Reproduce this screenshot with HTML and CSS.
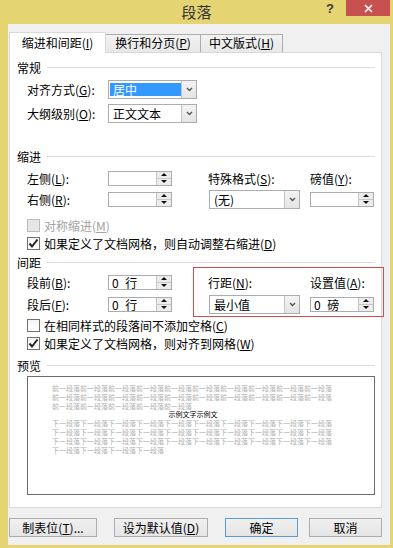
FILE: index.html
```html
<!DOCTYPE html>
<html lang="zh-CN">
<head>
    <meta charset="UTF-8">
    <meta name="viewport" content="width=device-width, initial-scale=1.0">
    <title>段落</title>
    <link rel="stylesheet" href="styles.css">
</head>
<body>
    <div class="titlebar">
        <div></div>
        <div class="title">段落</div>
        <div class="caption">
            <span class="help">?</span>
            <span class="close">
                <svg width="9" height="9" viewBox="0 0 9 9"><path d="M1 1L8 8M8 1L1 8" stroke="#fff" stroke-width="1.6"/></svg>
            </span>
        </div>
    </div>

    <div class="client">
        <div class="tabs">
            <div class="tab tab-1 active">缩进和间距(<u>I</u>)</div>
            <div class="tab tab-2">换行和分页(<u>P</u>)</div>
            <div class="tab tab-3">中文版式(<u>H</u>)</div>
        </div>

        <div class="panel">
            <!-- 常规 -->
            <div class="group-title gt-general"><span>常规</span><i></i></div>
            <div class="field field-first">
                <label>对齐方式(<u>G</u>):</label>
                <div class="combo combo-short">
                    <span class="sel">居中</span>
                    <span class="drop"><svg width="7" height="5" viewBox="0 0 7 5"><path d="M1 1L3.5 3.5L6 1" fill="none" stroke="#555" stroke-width="1.4"/></svg></span>
                </div>
            </div>
            <div class="field">
                <label>大纲级别(<u>O</u>):</label>
                <div class="combo combo-short">
                    <span>正文文本</span>
                    <span class="drop"><svg width="7" height="5" viewBox="0 0 7 5"><path d="M1 1L3.5 3.5L6 1" fill="none" stroke="#555" stroke-width="1.4"/></svg></span>
                </div>
            </div>

            <!-- 缩进 -->
            <div class="group-title gt-indent"><span>缩进</span><i></i></div>
            <div class="indent-grid">
                <label>左侧(<u>L</u>):</label>
                <div class="spin"><span></span><span class="arrows"><b class="up"></b><b class="down"></b></span></div>
                <label>特殊格式(<u>S</u>):</label>
                <label>磅值(<u>Y</u>):</label>
                <label>右侧(<u>R</u>):</label>
                <div class="spin"><span></span><span class="arrows"><b class="up"></b><b class="down"></b></span></div>
                <div class="combo combo-mid">
                    <span>(无)</span>
                    <span class="drop"><svg width="7" height="5" viewBox="0 0 7 5"><path d="M1 1L3.5 3.5L6 1" fill="none" stroke="#555" stroke-width="1.4"/></svg></span>
                </div>
                <div class="spin"><span></span><span class="arrows"><b class="up"></b><b class="down"></b></span></div>
            </div>

            <div class="check check-mirror disabled"><span class="box"></span>对称缩进(<u>M</u>)</div>
            <div class="check">
                <span class="box"><svg width="11" height="11" viewBox="0 0 11 11"><path d="M1.5 5.5L4 8.5L9.5 1.5" fill="none" stroke="#222" stroke-width="2"/></svg></span>如果定义了文档网格，则自动调整右缩进(<u>D</u>)
            </div>

            <!-- 间距 -->
            <div class="group-title gt-spacing"><span>间距</span><i></i></div>
            <div class="spacing-grid">
                <label>段前(<u>B</u>):</label>
                <div class="spin"><span class="val">0 行</span><span class="arrows"><b class="up"></b><b class="down"></b></span></div>
                <div class="line-box">
                    <label>行距(<u>N</u>):</label>
                    <label>设置值(<u>A</u>):</label>
                    <div class="combo combo-mid">
                        <span>最小值</span>
                        <span class="drop"><svg width="7" height="5" viewBox="0 0 7 5"><path d="M1 1L3.5 3.5L6 1" fill="none" stroke="#555" stroke-width="1.4"/></svg></span>
                    </div>
                    <div class="spin"><span class="val">0 磅</span><span class="arrows"><b class="up"></b><b class="down"></b></span></div>
                </div>
                <label>段后(<u>F</u>):</label>
                <div class="spin"><span class="val">0 行</span><span class="arrows"><b class="up"></b><b class="down"></b></span></div>
            </div>

            <div class="check check-same"><span class="box"></span>在相同样式的段落间不添加空格(<u>C</u>)</div>
            <div class="check check-grid">
                <span class="box"><svg width="11" height="11" viewBox="0 0 11 11"><path d="M1.5 5.5L4 8.5L9.5 1.5" fill="none" stroke="#222" stroke-width="2"/></svg></span>如果定义了文档网格，则对齐到网格(<u>W</u>)
            </div>

            <!-- 预览 -->
            <div class="group-title gt-preview"><span>预览</span><i></i></div>
            <div class="preview">
                <div class="preview-text">
                    <div>前一段落前一段落前一段落前一段落前一段落前一段落前一段落前一段落前一段落前一段落</div>
                    <div>前一段落前一段落前一段落前一段落前一段落前一段落前一段落前一段落前一段落前一段落</div>
                    <div>前一段落前一段落前一段落前一段落前一段落</div>
                    <div class="current">示例文字示例文</div>
                    <div>下一段落下一段落下一段落下一段落下一段落下一段落下一段落下一段落下一段落下一段落</div>
                    <div>下一段落下一段落下一段落下一段落下一段落下一段落下一段落下一段落下一段落下一段落</div>
                    <div>下一段落下一段落下一段落下一段落下一段落下一段落下一段落下一段落下一段落下一段落</div>
                    <div>下一段落下一段落下一段落下一段落</div>
                </div>
            </div>
        </div>

        <div class="buttons">
            <button class="btn btn-tabs">制表位(<u>T</u>)...</button>
            <button class="btn btn-default">设为默认值(<u>D</u>)</button>
            <button class="btn btn-ok">确定</button>
            <button class="btn btn-cancel">取消</button>
        </div>
    </div>
</body>
</html>
```

FILE: styles.css
```css
:root {
    --frame: #e5d472;
    --face: #f0f0f0;
    --edge: #acacac;
    --rule: #dcdcdc;
}

* {
    box-sizing: border-box;
}

body {
    margin: 0;
    width: 393px;
    height: 548px;
    overflow: hidden;
    background: var(--frame);
    font-family: "Noto Sans CJK SC", "Noto Sans", sans-serif;
    font-size: 12px;
    color: #000;
}

u {
    text-decoration: underline;
    text-underline-offset: 1px;
}

/* title bar */
.titlebar {
    height: 24px;
    display: grid;
    grid-template-columns: 1fr auto 1fr;
}

.title {
    font-size: 15px;
    line-height: 24px;
    color: #333;
}

.caption {
    display: flex;
    justify-content: flex-end;
    align-items: flex-start;
}

.help {
    font-family: "Liberation Sans", sans-serif;
    font-weight: bold;
    font-size: 13px;
    line-height: 14px;
    color: #3a3a3a;
    margin: 2px 12px 0 0;
}

.close {
    width: 44px;
    height: 16px;
    margin-right: 3px;
    background: #c75050;
    display: flex;
    align-items: center;
    justify-content: center;
}

/* client area */
.client {
    margin-left: 8px;
    width: 382px;
    height: 521px;
    background: var(--face);
    padding: 8px 0 0 1px;
}

.tabs {
    display: flex;
    align-items: flex-end;
    height: 21px;
    margin-bottom: -1px;
}

.tab {
    height: 18px;
    margin-bottom: 1px;
    line-height: 16px;
    text-align: center;
    border: 1px solid var(--edge);
    border-bottom: none;
    background: linear-gradient(#f2f2f2, #e8e8e8);
}

.tab-1 {
    width: 97px;
    height: 21px;
    margin-bottom: 0;
    line-height: 19px;
    background: #fff;
    border-color: #d9d9d9;
    position: relative;
    z-index: 1;
}

.tab-2 {
    width: 95px;
    border-left: none;
}

.tab-3 {
    width: 82px;
    border-left: none;
}

.panel {
    position: relative;
    width: 373px;
    height: 456px;
    background: #fff;
    border: 1px solid #d9d9d9;
    padding: 0 6px 0 7px;
}

.group-title {
    display: flex;
    align-items: center;
    gap: 6px;
    height: 16px;
}

.group-title i {
    flex: 1;
    height: 1px;
    background: var(--rule);
}

.gt-general { margin-top: 6px; }
.gt-indent { margin-top: 25px; }
.gt-spacing { margin-top: 3px; }
.gt-preview { margin-top: 6px; }

.field {
    display: flex;
    align-items: center;
    height: 19px;
    margin: 5px 0 0 10px;
}

.field label {
    width: 81px;
}

/* combo box */
.combo {
    display: flex;
    align-items: center;
    height: 19px;
    border: 1px solid var(--edge);
    background: #fff;
    padding-left: 4px;
}

.combo-short { width: 89px; }
.combo-mid { width: 91px; margin-left: 1px; }

.combo .sel {
    width: 71px;
    height: 13px;
    line-height: 13px;
    margin-left: -3px;
    padding-left: 3px;
    background: #3399ff;
    color: #fff;
}

.combo .drop {
    margin-left: auto;
    width: 15px;
    height: 17px;
    border-left: 1px solid #c4c4c4;
    background: linear-gradient(#f3f3f3, #e4e4e4);
    display: flex;
    align-items: center;
    justify-content: center;
}

/* spin box */
.spin {
    display: flex;
    align-items: center;
    width: 64px;
    height: 15px;
    border: 1px solid var(--edge);
    background: #fff;
    padding-left: 3px;
}

.spin .val {
    word-spacing: 4px;
}

.spin .arrows {
    margin-left: auto;
    width: 15px;
    height: 13px;
    border-left: 1px solid #c4c4c4;
    background: #ececec;
    display: flex;
    flex-direction: column;
}

.arrows b {
    flex: 1;
    display: flex;
    align-items: center;
    justify-content: center;
}

.arrows b.up {
    border-bottom: 1px solid #c8c8c8;
}

.arrows b::after {
    content: "";
    border-left: 3px solid transparent;
    border-right: 3px solid transparent;
}

.arrows b.up::after {
    border-bottom: 3px solid #111;
}

.arrows b.down::after {
    border-top: 3px solid #111;
}

/* indent and spacing grids */
.indent-grid {
    display: grid;
    grid-template-columns: 81px 100px 102px 65px;
    grid-template-rows: 20px 20px;
    row-gap: 1px;
    align-items: center;
    margin: 4px 0 0 10px;
}

.spacing-grid {
    display: grid;
    grid-template-columns: 81px 100px 167px;
    grid-template-rows: 20px 20px;
    row-gap: 2px;
    align-items: center;
    margin: 2px 0 0 10px;
}

.line-box {
    grid-row: span 2;
    align-self: stretch;
    margin: -5px -9px -3px -15px;
    padding: 4px 8px 2px 14px;
    border: 1px solid #d24d4d;
    display: grid;
    grid-template-columns: 102px 65px;
    grid-template-rows: 20px 20px;
    row-gap: 2px;
    align-items: center;
}

/* checkboxes */
.check {
    display: flex;
    align-items: center;
    height: 16px;
    margin: 2px 0 0 10px;
}

.check-mirror { margin-top: 8px; }
.check-same { margin-top: 3px; }

.box {
    width: 13px;
    height: 13px;
    margin-right: 4px;
    border: 1px solid #707070;
    background: linear-gradient(#f4f4f4, #fff);
    display: flex;
    align-items: center;
    justify-content: center;
}

.check.disabled {
    color: #a3a3a3;
}

.check.disabled .box {
    border-color: #bcbcbc;
    background: #e6e6e6;
}

/* preview */
.preview {
    margin: 3px 0 0 10px;
    width: 348px;
    height: 119px;
    border: 1px solid #6d6d6d;
    background: #fff;
    padding: 7px 0 0 24px;
}

.preview-text {
    width: 282px;
    font-size: 7px;
    line-height: 8.8px;
    color: #b0b0b0;
    white-space: nowrap;
}

.preview-text .current {
    color: #000;
    text-align: center;
}

/* bottom buttons */
.buttons {
    display: flex;
    margin-top: 10px;
}

.btn {
    height: 19px;
    padding: 0;
    border: 1px solid var(--edge);
    background: linear-gradient(#f0f0f0, #e5e5e5);
    font-family: inherit;
    font-size: 12px;
    color: #000;
    display: flex;
    align-items: center;
    justify-content: center;
}

.btn-tabs { width: 88px; }
.btn-default { width: 94px; margin-left: 17px; }
.btn-ok { width: 73px; margin-left: 17px; border-color: #5b9bd5; }
.btn-cancel { width: 73px; margin-left: 11px; }
```
